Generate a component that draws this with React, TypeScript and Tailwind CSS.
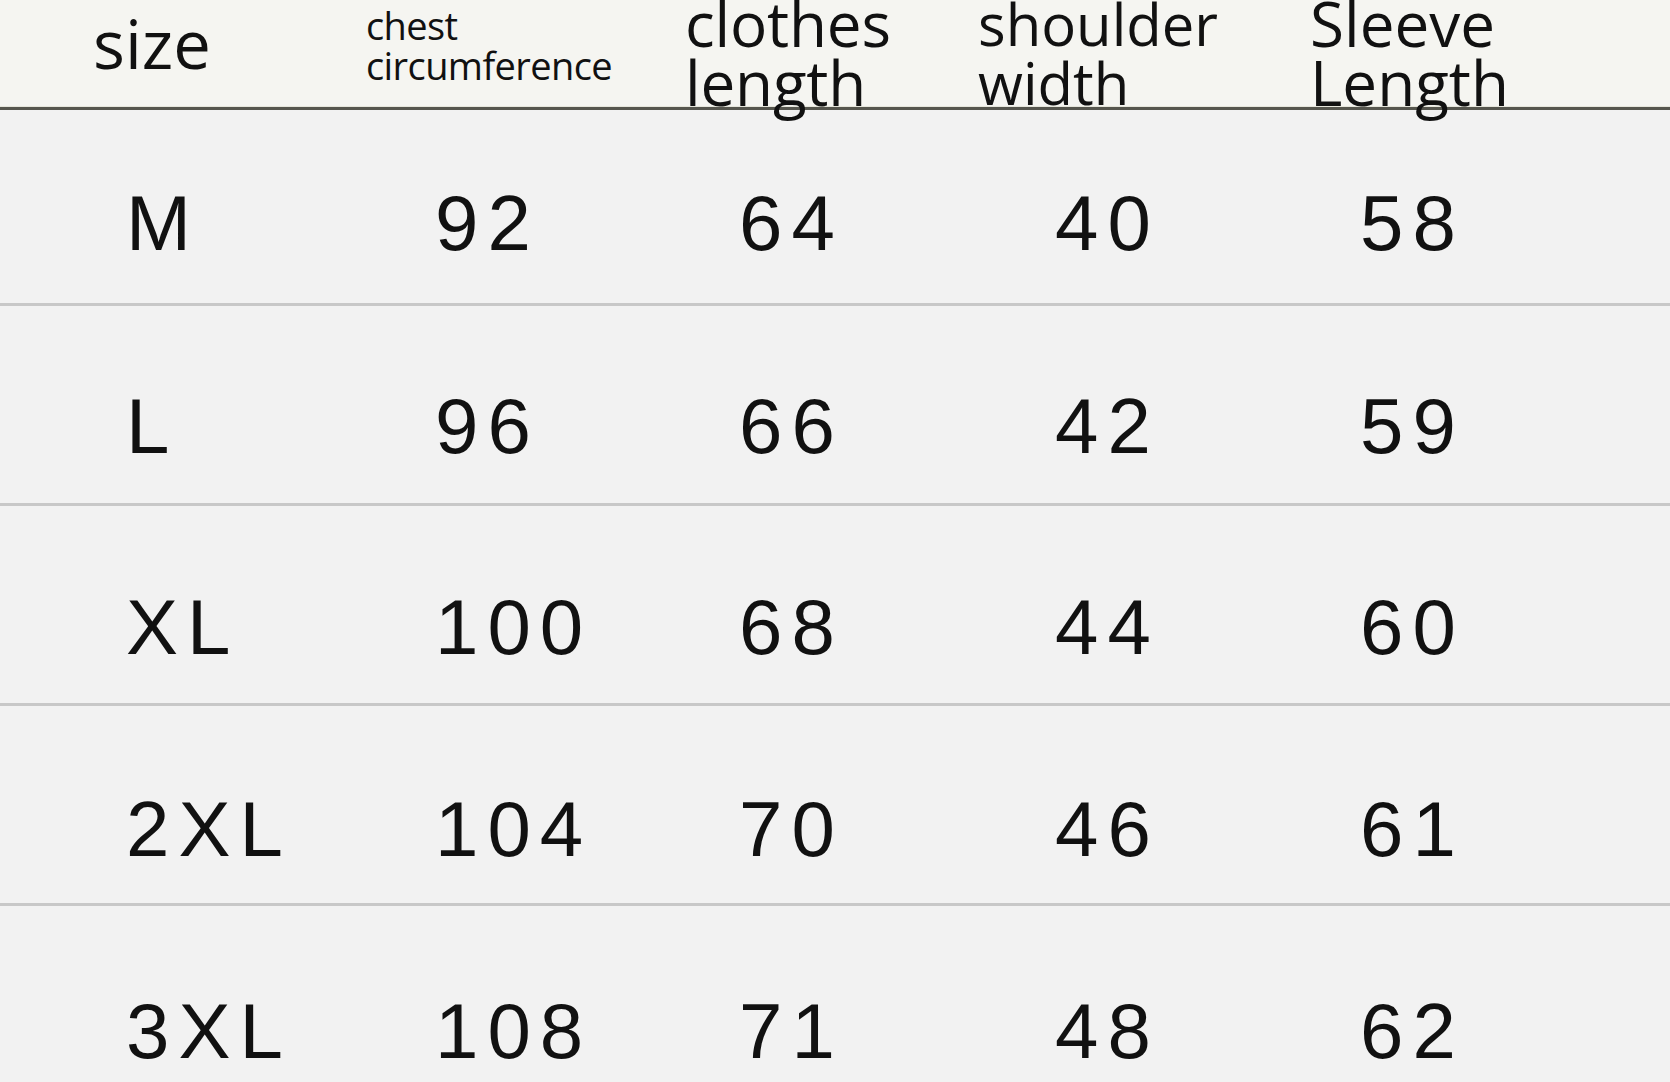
const rows = [
  ["M", "92", "64", "40", "58"],
  ["L", "96", "66", "42", "59"],
  ["XL", "100", "68", "44", "60"],
  ["2XL", "104", "70", "46", "61"],
  ["3XL", "108", "71", "48", "62"],
];

const bodyWidths = ["w-[309px]", "w-[304px]", "w-[316px]", "w-[305px]", "flex-1"];

// the rows drift a little lower in the source picture, so each has its own top pad
const rowBox = [
  "h-[193px] pt-[32px]",
  "h-[197px] pt-[42px]",
  "h-[197px] pt-[44px]",
  "h-[197px] pt-[48px]",
  "h-[197px] pt-[53px]",
];

function HeaderRow() {
  return (
    <div className="relative z-10 flex h-[106px] items-start bg-[#f5f5f1] pl-[93px] text-[#111] font-['Open_Sans','Noto_Sans',sans-serif]">
      <div className="w-[273px] pt-[10px] text-[67px] leading-[67px]">size</div>
      <div className="w-[319px] pt-[5px] text-[38px] leading-[40px] tracking-[-0.6px]">
        chest
        <br />
        circumference
      </div>
      <div className="w-[293px] -mt-[6px] text-[62px] leading-[59px] tracking-[-0.2px]">
        clothes
        <br />
        length
      </div>
      <div className="w-[332px] -mt-[6px] text-[58px] leading-[59px]">
        shoulder
        <br />
        width
      </div>
      <div className="flex-1 -mt-[6px] text-[62px] leading-[59px]">
        Sleeve
        <br />
        Length
      </div>
    </div>
  );
}

function BodyRow({ cells, index, last }: { cells: string[]; index: number; last: boolean }) {
  return (
    <div className="flex flex-col">
      <div
        className={`flex items-center pl-[126px] text-[78px] leading-none tracking-[9px] text-[#111] font-['Liberation_Sans',Arial,sans-serif] ${rowBox[index]}`}
      >
        {cells.map((c, i) => (
          <div key={i} className={bodyWidths[i]}>
            {c}
          </div>
        ))}
      </div>
      {!last && <div className="h-[3px] bg-[#c8c8c8]" />}
    </div>
  );
}

export default function App() {
  return (
    <div className="h-[1082px] w-[1670px] overflow-hidden bg-[#f2f2f2]">
      <HeaderRow />
      <div className="h-[1px] bg-[#e6e6dc]" />
      <div className="h-[3px] bg-[#56564e]" />
      {rows.map((r, i) => (
        <BodyRow key={r[0]} cells={r} index={i} last={i === rows.length - 1} />
      ))}
    </div>
  );
}
